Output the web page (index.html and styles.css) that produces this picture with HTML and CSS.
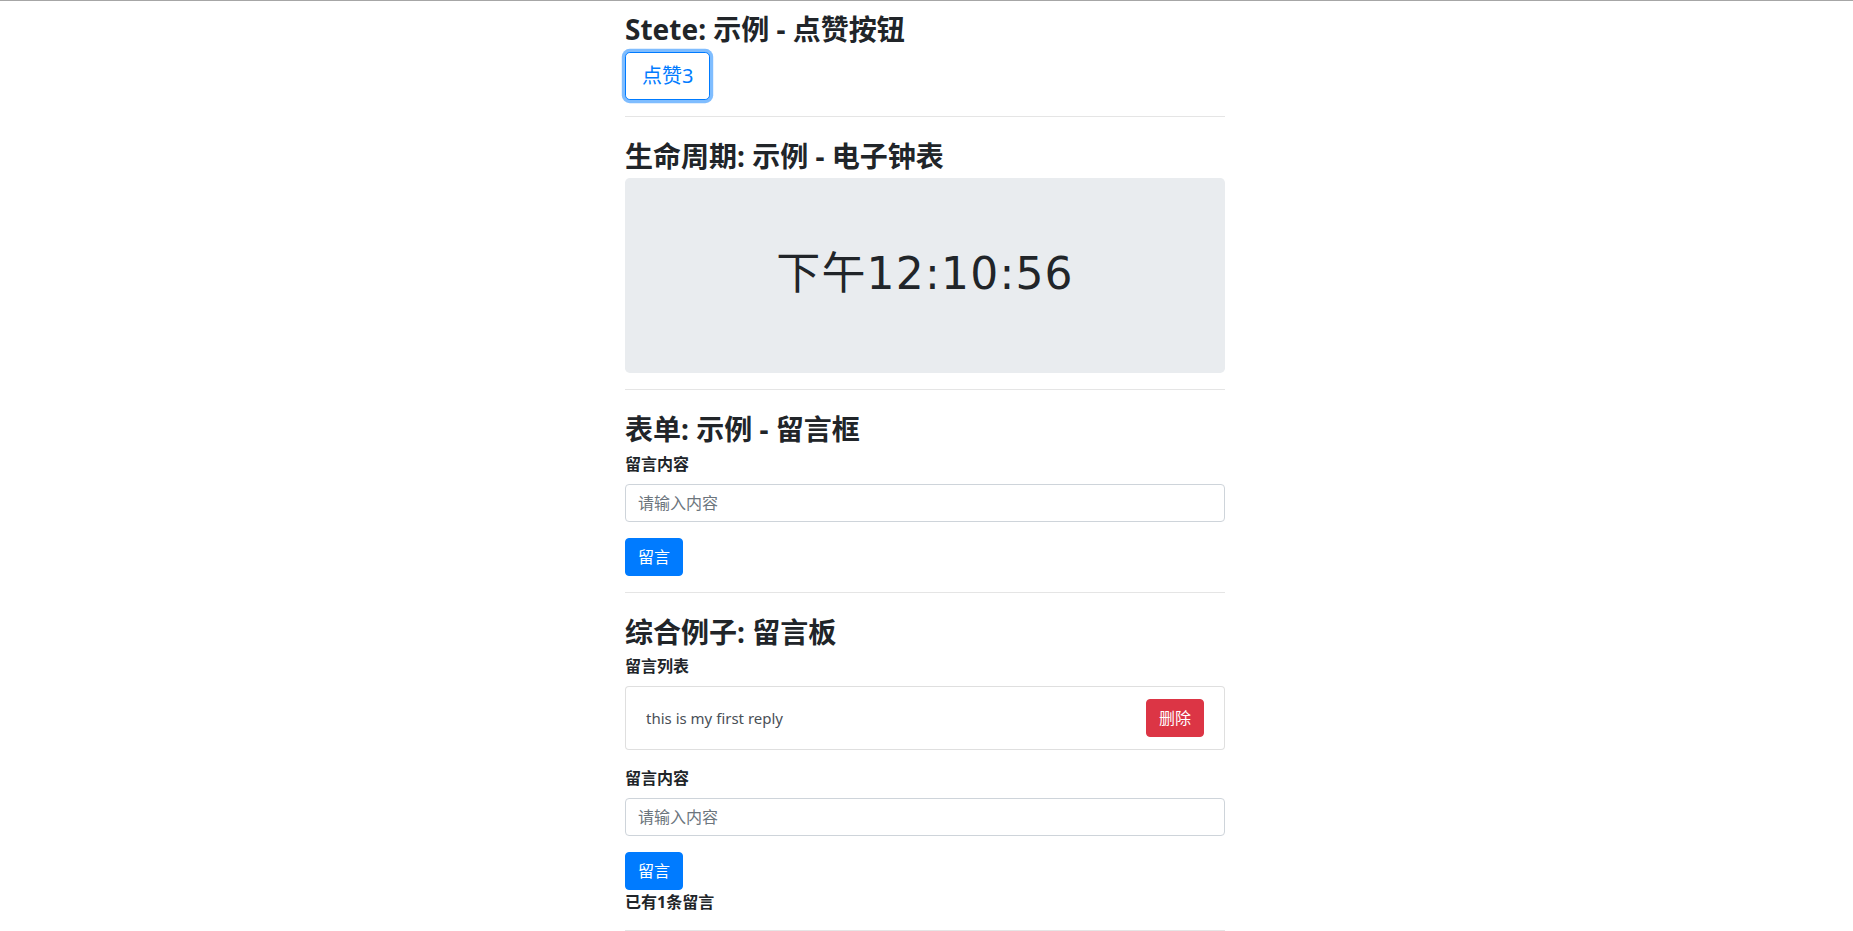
FILE: index.html
```html
<!DOCTYPE html>
<html lang="zh-CN">
<head>
<meta charset="utf-8">
<title>React 示例</title>
<link rel="stylesheet" href="styles.css">
</head>
<body>
<div class="topline"></div>
<main class="page">
  <section class="demo demo-first">
    <h3 class="demo-title">Stete: 示例 - 点赞按钮</h3>
    <button class="btn btn-outline-primary btn-lg is-focused" type="button">点赞3</button>
  </section>
  <hr class="divider">
  <section class="demo">
    <h3 class="demo-title">生命周期: 示例 - 电子钟表</h3>
    <div class="jumbotron">
      <h1 class="clock">下午12:10:56</h1>
    </div>
  </section>
  <hr class="divider">
  <section class="demo">
    <h3 class="demo-title">表单: 示例 - 留言框</h3>
    <form class="reply-form">
      <div class="form-group">
        <label class="field-label">留言内容</label>
        <input class="form-control" type="text" placeholder="请输入内容">
      </div>
      <button class="btn btn-primary" type="button">留言</button>
    </form>
  </section>
  <hr class="divider">
  <section class="demo">
    <h3 class="demo-title">综合例子: 留言板</h3>
    <label class="field-label">留言列表</label>
    <ul class="list-group">
      <li class="list-group-item">
        <span class="reply-text">this is my first reply</span>
        <button class="btn btn-danger" type="button">删除</button>
      </li>
    </ul>
    <form class="reply-form">
      <div class="form-group">
        <label class="field-label">留言内容</label>
        <input class="form-control" type="text" placeholder="请输入内容">
      </div>
      <button class="btn btn-primary" type="button">留言</button>
    </form>
    <p class="reply-count">已有1条留言</p>
  </section>
  <hr class="divider">
</main>
</body>
</html>
```

FILE: styles.css
```css
* {
  box-sizing: border-box;
}

html, body {
  margin: 0;
  padding: 0;
  background: #ffffff;
}

body {
  font-family: "Noto Sans", "Noto Sans CJK SC", sans-serif;
  font-size: 16px;
  line-height: 1.5;
  color: #212529;
  padding-right: 3px;
}

.topline {
  height: 1px;
  margin-right: -3px;
  background: #a6a6a6;
}

.page {
  width: 600px;
  margin: 0 auto;
  padding-top: 5px;
}

.demo {
  display: flex;
  flex-direction: column;
  align-items: flex-start;
}

.demo-title {
  font-size: 28px;
  line-height: 33.6px;
  font-weight: 700;
  padding-top: 7px;
  margin: 0 0 5px;
  color: #212529;
}

.divider {
  width: 100%;
  margin: 16px 0;
  border: 0;
  border-top: 1px solid rgba(0, 0, 0, 0.1);
}

.btn {
  display: inline-block;
  font-family: inherit;
  font-size: 16px;
  line-height: 24px;
  font-weight: 400;
  padding: 6px 12px;
  border: 1px solid transparent;
  border-radius: 4px;
  cursor: pointer;
  background: transparent;
  text-align: center;
}

.btn-lg {
  font-size: 20px;
  line-height: 30px;
  padding: 8px 16px;
  border-radius: 4.8px;
}

.btn-outline-primary {
  color: #007bff;
  border-color: #007bff;
  background: #fff;
}

.is-focused {
  box-shadow: 0 0 0 3.2px rgba(0, 123, 255, 0.5);
}

.btn-primary {
  color: #fff;
  background: #007bff;
  border-color: #007bff;
}

.btn-danger {
  color: #fff;
  background: #dc3545;
  border-color: #dc3545;
}

.jumbotron {
  align-self: stretch;
  padding: 62px 32px 66px;
  background: #e9ecef;
  border-radius: 4.8px;
}

.clock {
  margin: 0;
  text-align: center;
  font-family: "DejaVu Sans", "Noto Sans CJK SC", sans-serif;
  font-size: 44px;
  line-height: 67px;
  font-weight: 400;
  color: #212529;
  letter-spacing: 1.2px;
}

.reply-form {
  align-self: stretch;
  display: flex;
  flex-direction: column;
  align-items: flex-start;
}

.form-group {
  align-self: stretch;
  display: flex;
  flex-direction: column;
  margin-bottom: 16px;
}

.field-label {
  display: block;
  font-weight: 700;
  font-size: 16px;
  line-height: 24px;
  margin-bottom: 8px;
}

.form-control {
  display: block;
  width: 100%;
  height: 38px;
  padding: 6px 12px;
  font-family: inherit;
  font-size: 16px;
  line-height: 24px;
  color: #495057;
  background: #fff;
  border: 1px solid #ced4da;
  border-radius: 4px;
}

.form-control::placeholder {
  color: #6c757d;
  opacity: 1;
}

.list-group {
  align-self: stretch;
  list-style: none;
  margin: 0 0 16px;
  padding: 0;
}

.list-group-item {
  display: flex;
  justify-content: space-between;
  align-items: center;
  padding: 12px 20px;
  border: 1px solid rgba(0, 0, 0, 0.125);
  border-radius: 4px;
  background: #fff;
}

.reply-text {
  color: #495057;
  font-size: 15px;
}

.reply-count {
  margin: 0;
  font-weight: 700;
  font-size: 16px;
  line-height: 24px;
}
```
